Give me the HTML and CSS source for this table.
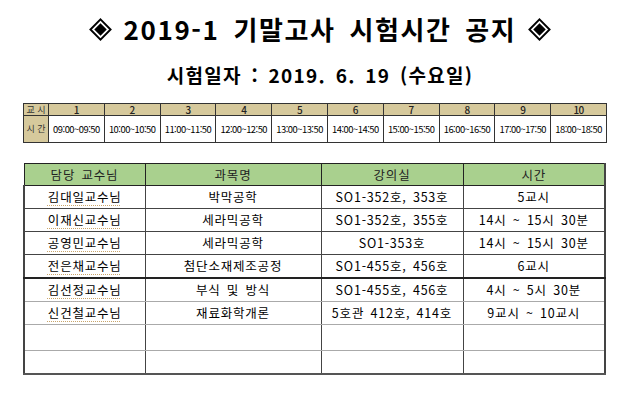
FILE: index.html
```html
<!DOCTYPE html>
<html lang="ko">
<head>
<meta charset="utf-8">
<link rel="stylesheet" href="styles.css">
</head>
<body>
<div class="page">
  <h1 class="title">
    <svg class="dia" viewBox="0 0 24 24"><path d="M12 1.5 L22.5 12 L12 22.5 L1.5 12 Z" fill="none" stroke="#000" stroke-width="2"/><path d="M12 5.5 L18.5 12 L12 18.5 L5.5 12 Z" fill="#000"/></svg>
    <span>2019-1 기말고사 시험시간 공지</span>
    <svg class="dia" viewBox="0 0 24 24"><path d="M12 1.5 L22.5 12 L12 22.5 L1.5 12 Z" fill="none" stroke="#000" stroke-width="2"/><path d="M12 5.5 L18.5 12 L12 18.5 L5.5 12 Z" fill="#000"/></svg>
  </h1>
  <h2 class="subtitle">시험일자 : 2019. 6. 19 (수요일)</h2>

  <table class="periods">
    <tr class="phead">
      <th class="lab">교 시</th><th>1</th><th>2</th><th>3</th><th>4</th><th>5</th><th>6</th><th>7</th><th>8</th><th>9</th><th>10</th>
    </tr>
    <tr class="pbody">
      <th class="lab">시 간</th>
      <td>09:00~09:50</td><td>10:00~10:50</td><td>11:00~11:50</td><td>12:00~12:50</td><td>13:00~13:50</td>
      <td>14:00~14:50</td><td>15:00~15:50</td><td>16:00~16:50</td><td>17:00~17:50</td><td>18:00~18:50</td>
    </tr>
  </table>

  <table class="exams">
    <colgroup><col class="c1"><col class="c2"><col class="c3"><col class="c4"></colgroup>
    <tr class="ehead"><th>담당 교수님</th><th>과목명</th><th>강의실</th><th>시간</th></tr>
    <tr><td><span class="nm">김대일교수님</span></td><td>박막공학</td><td>SO1-352호, 353호</td><td>5교시</td></tr>
    <tr><td><span class="nm">이재신교수님</span></td><td>세라믹공학</td><td>SO1-352호, 355호</td><td>14시 ~ 15시 30분</td></tr>
    <tr><td><span class="nm">공영민교수님</span></td><td>세라믹공학</td><td>SO1-353호</td><td>14시 ~ 15시 30분</td></tr>
    <tr class="thick"><td><span class="nm">전은채교수님</span></td><td>첨단소재제조공정</td><td>SO1-455호, 456호</td><td>6교시</td></tr>
    <tr class="lo"><td><span class="nm">김선정교수님</span></td><td>부식 및 방식</td><td>SO1-455호, 456호</td><td>4시 ~ 5시 30분</td></tr>
    <tr class="lo"><td><span class="nm">신건철교수님</span></td><td>재료화학개론</td><td>5호관 412호, 414호</td><td>9교시 ~ 10교시</td></tr>
    <tr class="lo empty e1"><td></td><td></td><td></td><td></td></tr>
    <tr class="lo empty last"><td></td><td></td><td></td><td></td></tr>
  </table>
</div>
</body>
</html>
```

FILE: styles.css
```css
html, body {
  margin: 0;
  padding: 0;
  background: #fff;
}
.page {
  width: 640px;
  height: 414px;
  overflow: hidden;
  font-family: "Noto Sans CJK KR", "Noto Sans", sans-serif;
  color: #000;
}
.title {
  margin: 0;
  padding-top: 11px;
  height: 36px;
  display: flex;
  align-items: center;
  justify-content: center;
  gap: 10px;
  font-size: 26px;
  font-weight: 700;
  line-height: 36px;
  letter-spacing: 1.6px;
  word-spacing: 5px;
}
.title span { padding: 0 2px; }
.dia {
  width: 23px;
  height: 23px;
}
.subtitle {
  margin: 0;
  margin-top: 14px;
  height: 28px;
  text-align: center;
  font-size: 19px;
  font-weight: 700;
  line-height: 28px;
  letter-spacing: 1.3px;
  word-spacing: 3px;
}
.periods {
  margin: 14px 0 0 23px;
  border-collapse: collapse;
  table-layout: fixed;
  width: 584px;
  font-family: "Noto Sans CJK KR", sans-serif;
  font-size: 9.4px;
  letter-spacing: -0.5px;
}
.periods th, .periods td {
  border: 1px solid #333;
  padding: 0;
  text-align: center;
  white-space: nowrap;
  overflow: hidden;
}
.periods .lab {
  width: 24px;
  background: #d6c99c;
  font-weight: 400;
  font-size: 9px;
  letter-spacing: 0;
  color: #333;
}
.phead th {
  background: #d6c99c;
  height: 11px;
  line-height: 11px;
  font-weight: 500;
  font-size: 10px;
  color: #222;
}
.pbody td, .pbody th {
  height: 26px;
  line-height: 26px;
}
.exams {
  margin: 20px 0 0 23px;
  border-collapse: collapse;
  table-layout: fixed;
  width: 581px;
  font-size: 12.5px;
  letter-spacing: 0.8px;
  word-spacing: 2px;
}
.c1 { width: 121px; }
.c2 { width: 176px; }
.c3 { width: 142px; }
.c4 { width: 142px; }
.exams th, .exams td {
  border: 1px solid #444;
  padding: 0;
  text-align: center;
  height: 22px;
  line-height: 22px;
  white-space: nowrap;
}
.exams th {
  background: #a9d08e;
  font-weight: 400;
  color: #222;
  border-color: #222;
  height: 21px;
  line-height: 21px;
}
.exams tr.thick td {
  border-bottom: 2px solid #222;
}
.exams tr.lo td {
  border-color: #aaa;
  border-left-color: #444;
  border-right-color: #444;
}
.exams tr.lo td:nth-child(3) {
  border-left-color: #bbb;
}
.exams tr.e1 td { height: 25px; }
.exams tr.last td { height: 22px; border-bottom: 2px solid #555; }
.exams tr td:first-child { border-left: 2px solid #444; }
.exams tr td:last-child, .exams tr th:last-child { border-right: 2px solid #444; }
.nm {
  text-decoration: underline dotted #c9a46a;
  text-underline-offset: 3px;
  text-decoration-thickness: 1px;
}
```
